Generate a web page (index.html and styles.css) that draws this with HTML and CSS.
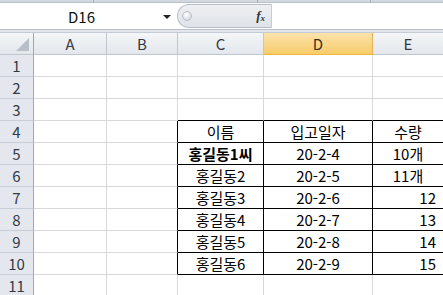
FILE: index.html
```html
<!DOCTYPE html>
<html lang="ko">
<head>
  <meta charset="UTF-8">
  <title>Sheet1</title>
  <link rel="stylesheet" href="styles.css">
</head>
<body>
  <div class="ribbon-edge">
    <span class="tick t1"></span><span class="tick t2"></span><span class="tick t3"></span>
  </div>
  <div class="formula-bar">
    <div class="name-box">
      <span class="name">D16</span>
      <span class="arrow"></span>
    </div>
    <div class="splitter">
      <span class="knob"></span>
      <span class="fx">f<sub>x</sub></span>
    </div>
    <div class="formula-input"></div>
  </div>
  <div class="bar-gap"></div>

  <div class="sheet">
    <div class="hd corner"><span class="tri"></span></div>
    <div class="hd col">A</div>
    <div class="hd col">B</div>
    <div class="hd col">C</div>
    <div class="hd col sel">D</div>
    <div class="hd col">E</div>

    <div class="hd row">1</div><div class="c"></div><div class="c"></div><div class="c"></div><div class="c"></div><div class="c"></div>
    <div class="hd row">2</div><div class="c"></div><div class="c"></div><div class="c"></div><div class="c"></div><div class="c"></div>
    <div class="hd row">3</div><div class="c"></div><div class="c"></div><div class="c tb"></div><div class="c tb"></div><div class="c tb"></div>

    <div class="hd row">4</div><div class="c"></div><div class="c tr"></div>
    <div class="c t mid">이름</div><div class="c t mid">입고일자</div><div class="c t mid">수량</div>

    <div class="hd row">5</div><div class="c"></div><div class="c tr"></div>
    <div class="c t mid bold">홍길동1씨</div><div class="c t mid">20-2-4</div><div class="c t mid">10개</div>

    <div class="hd row">6</div><div class="c"></div><div class="c tr"></div>
    <div class="c t mid">홍길동2</div><div class="c t mid">20-2-5</div><div class="c t mid">11개</div>

    <div class="hd row">7</div><div class="c"></div><div class="c tr"></div>
    <div class="c t mid">홍길동3</div><div class="c t mid">20-2-6</div><div class="c t num">12</div>

    <div class="hd row">8</div><div class="c"></div><div class="c tr"></div>
    <div class="c t mid">홍길동4</div><div class="c t mid">20-2-7</div><div class="c t num">13</div>

    <div class="hd row">9</div><div class="c"></div><div class="c tr"></div>
    <div class="c t mid">홍길동5</div><div class="c t mid">20-2-8</div><div class="c t num">14</div>

    <div class="hd row">10</div><div class="c"></div><div class="c tr"></div>
    <div class="c t mid">홍길동6</div><div class="c t mid">20-2-9</div><div class="c t num">15</div>

    <div class="hd row">11</div><div class="c"></div><div class="c"></div><div class="c"></div><div class="c"></div><div class="c"></div>
  </div>
</body>
</html>
```

FILE: styles.css
```css
* {
  box-sizing: border-box;
}

body {
  margin: 0;
  width: 443px;
  height: 295px;
  overflow: hidden;
  background-color: #fff;
  font-family: "Noto Sans CJK KR", "Noto Sans", sans-serif;
  color: #000;
}

/* strip left of the ribbon above the formula bar */
.ribbon-edge {
  position: relative;
  height: 3px;
  background-color: #d3d8df;
  border-bottom: 1px solid #b9c0c9;
}

.tick {
  position: absolute;
  top: 0;
  width: 1px;
  height: 3px;
  background-color: #a9b0ba;
}

.t1 { left: 93px; }
.t2 { left: 257px; }
.t3 { left: 370px; }

.formula-bar {
  display: flex;
  height: 26px;
  background-color: #fff;
}

.name-box {
  display: flex;
  align-items: center;
  width: 177px;
  padding-left: 60px;
  font-size: 15px;
  color: #111;
}

.name {
  width: 103px;
  text-align: left;
  padding-left: 8px;
}

.arrow {
  width: 0;
  height: 0;
  border-left: 4px solid transparent;
  border-right: 4px solid transparent;
  border-top: 4px solid #222;
  margin-top: 2px;
}

.splitter {
  display: flex;
  align-items: center;
  justify-content: space-between;
  width: 95px;
  padding: 0 6px 0 4px;
  background: linear-gradient(#eef0f3, #dfe3e8);
  border-radius: 12px 0 0 12px;
  border: 1px solid #b7bec8;
  border-right: 1px solid #c6ccd4;
  margin: 1px 0;
}

.knob {
  width: 10px;
  height: 10px;
  border-radius: 50%;
  background: radial-gradient(circle at 40% 35%, #fff, #c9ced6);
  border: 1px solid #b8bec7;
}

.fx {
  font-family: "Liberation Serif", serif;
  font-style: italic;
  font-weight: bold;
  font-size: 13px;
  color: #333;
}

.fx sub {
  font-size: 9px;
  vertical-align: -1px;
}

.formula-input {
  flex: 1;
  background-color: #fff;
}

.bar-gap {
  height: 4px;
  background-color: #e3e6ea;
  border-top: 1px solid #b9c0c9;
  border-bottom: 1px solid #c5ccd5;
}

.sheet {
  display: grid;
  grid-template-columns: 34px 73px 71px 86px 109px 71px;
  grid-auto-rows: 22px;
}

.hd {
  display: flex;
  align-items: center;
  justify-content: center;
  background: linear-gradient(#f4f6f8, #e3e7ec);
  border-right: 1px solid #c1c7cf;
  border-bottom: 1px solid #c1c7cf;
  font-size: 15px;
  color: #333a45;
  line-height: 1;
}

.row {
  background: #e4e8ee;
  border-bottom-color: #c7ced7;
  border-right-color: #9fa8b4;
}

.corner {
  justify-content: flex-end;
  align-items: flex-end;
  padding: 0 4px 3px 0;
  border-right-color: #9fa8b4;
}

.tri {
  width: 0;
  height: 0;
  border-left: 13px solid transparent;
  border-bottom: 13px solid #b9bfc8;
}

.sel {
  background: linear-gradient(#fbe3ac, #f7cc6a);
  border-bottom-color: #f2b63c;
  border-right-color: #e5b356;
  color: #3a3020;
}

.c {
  display: flex;
  align-items: center;
  border-right: 1px solid #d9d9d9;
  border-bottom: 1px solid #d9d9d9;
  font-size: 15px;
  line-height: 1;
  white-space: nowrap;
}

/* data block borders */
.t {
  border-right-color: #000;
  border-bottom-color: #000;
}

.tb {
  border-bottom-color: #000;
}

.tr {
  border-right-color: #000;
}

.mid {
  justify-content: center;
}

.num {
  justify-content: flex-end;
  padding-right: 7px;
}

.bold {
  font-weight: bold;
}
```
